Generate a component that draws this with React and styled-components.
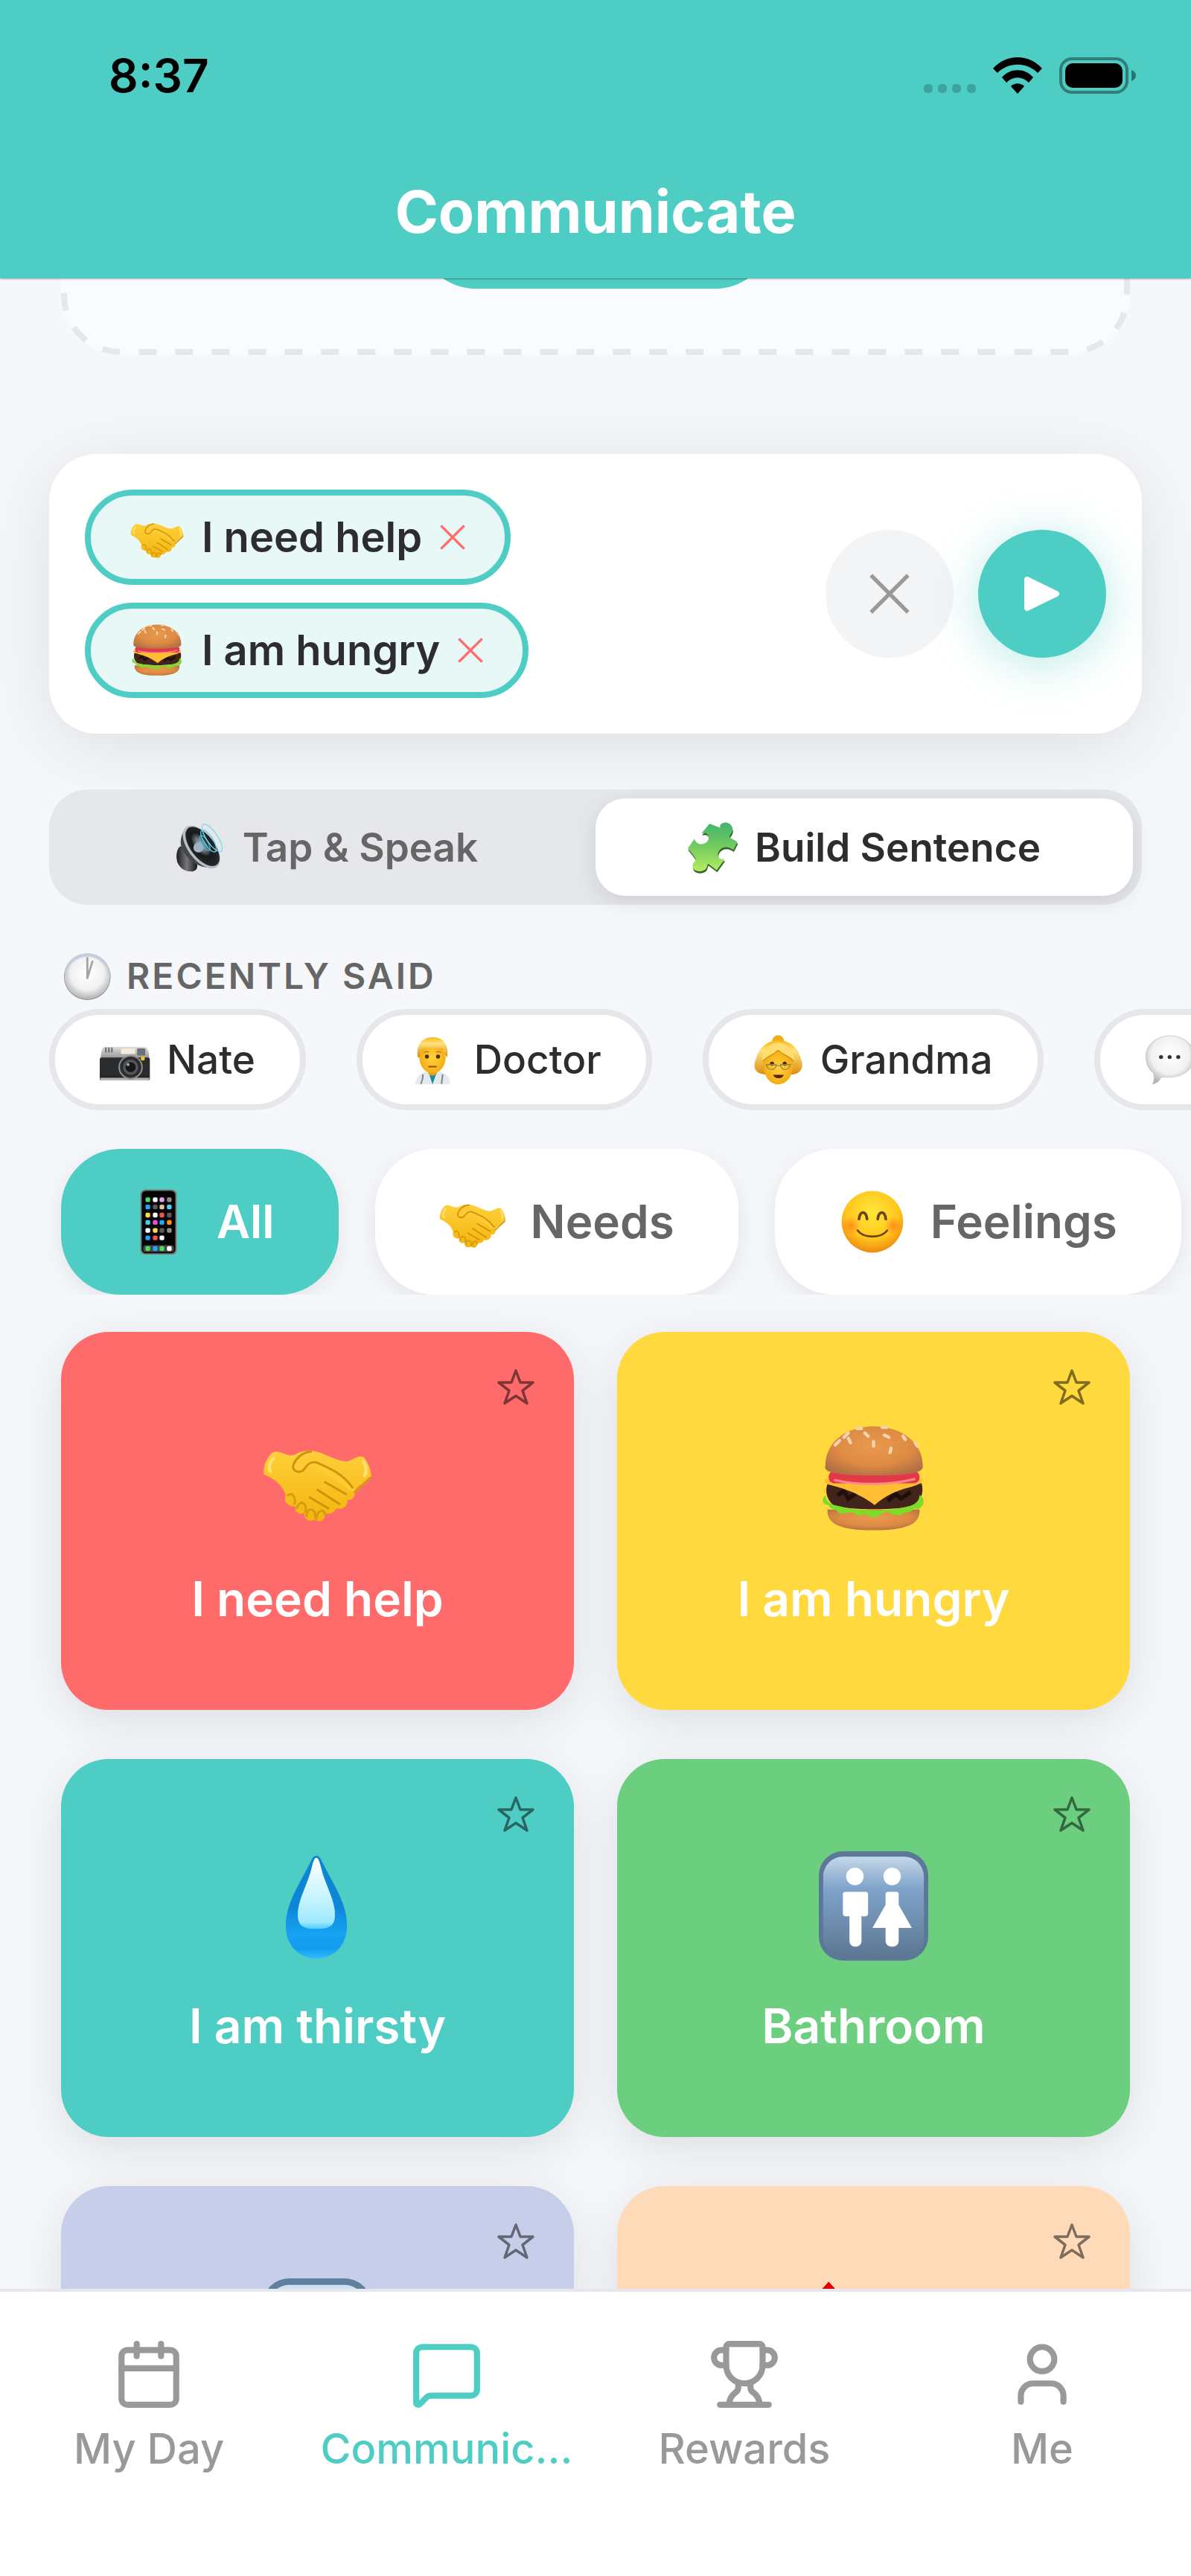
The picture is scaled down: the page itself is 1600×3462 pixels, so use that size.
import React, { useState } from 'react'
import styled, { createGlobalStyle } from 'styled-components';
import { Calendar, MessageSquare, Trophy, User } from 'lucide-react';

const teal = '#4ecdc4';

const GlobalStyle = createGlobalStyle`
* { box-sizing: border-box; }
body {
  margin: 0;
  background: #f5f7fb;
  font-family: Inter, "Liberation Sans", sans-serif;
}
button {
  font-family: inherit;
  border: none;
  padding: 0;
  margin: 0;
  background: none;
  cursor: pointer;
}
`;

const Screen = styled.div`
display: flex;
flex-direction: column;
height: 100vh;
overflow: hidden;
`;

const Header = styled.header`
position: relative;
z-index: 1;
background: ${teal};
box-shadow: 0 1px 2px rgba(0,0,0,0.35);
`;

const StatusBar = styled.div`
display: flex;
justify-content: space-between;
align-items: center;
padding: 64px 73px 0 146px;
`;

const Clock = styled.span`
font-size: 62px;
line-height: 76px;
font-weight: 600;
color: #000;
`;

const StatusIcons = styled.div`
display: flex;
align-items: center;
gap: 23px;
`;

const Title = styled.h1`
margin: 0;
padding: 94px 0 40px;
text-align: center;
font-size: 79px;
line-height: 100px;
font-weight: 700;
color: #fff;
`;

const Scroll = styled.main`
flex: 1;
min-height: 0;
overflow: hidden;
`;

/* the list is scrolled so this panel sits mostly under the header */
const AddPanel = styled.section`
position: relative;
display: flex;
justify-content: center;
margin: -157px 82px 0;
padding: 10px 0 89px;
background: #fafbfd;
border-radius: 80px;
`;

const DashedFrame = styled.svg`
position: absolute;
inset: 0;
width: 100%;
height: 100%;
rect {
  width: calc(100% - 8px);
  height: calc(100% - 8px);
}
`;

const AddButton = styled.button`
width: 480px;
height: 161px;
border-radius: 80px;
background: ${teal};
`;

const SentenceCard = styled.section`
display: flex;
justify-content: space-between;
align-items: center;
margin: 133px 66px 0;
padding: 48px;
border-radius: 64px;
background: #fff;
box-shadow: 0 16px 96px rgba(0,0,0,0.1);
`;

const Chips = styled.div`
display: flex;
flex-direction: column;
align-items: flex-start;
gap: 24px;
`;

const Chip = styled.button`
display: flex;
align-items: center;
gap: 24px;
padding: 20px 53px;
border: 8px solid ${teal};
border-radius: 64px;
background: #e8f8f6;
font-size: 56px;
line-height: 72px;
font-weight: 600;
color: #2d2d2f;
`;

const Actions = styled.div`
display: flex;
gap: 33px;
`;

const RoundButton = styled.button`
display: flex;
align-items: center;
justify-content: center;
width: 172px;
height: 172px;
border-radius: 50%;
background: ${({ $primary }) => ($primary ? teal : '#f3f4f6')};
box-shadow: ${({ $primary }) => ($primary ? '0 8px 64px rgba(78,205,196,0.4)' : 'none')};
`;

const Segmented = styled.div`
display: flex;
margin: 75px 66px 0;
padding: 12px;
border-radius: 52px;
background: #e5e7eb;
`;

const Segment = styled.button`
flex: 1;
display: flex;
align-items: center;
justify-content: center;
gap: 22px;
height: 131px;
border-radius: 40px;
font-size: 53px;
line-height: 68px;
font-weight: 600;
color: ${({ $active }) => ($active ? '#2d2d2f' : '#666')};
background: ${({ $active }) => ($active ? '#fff' : 'transparent')};
box-shadow: ${({ $active }) => ($active ? '0 8px 32px rgba(0,0,0,0.1)' : 'none')};
`;

const SectionTitle = styled.h2`
display: flex;
align-items: center;
gap: 18px;
margin: 62px 84px 10px;
font-size: 48px;
line-height: 68px;
font-weight: 600;
letter-spacing: 3px;
color: #666;
`;

const RecentRow = styled.div`
display: flex;
gap: 68px;
padding: 0 66px;
overflow: hidden;
`;

const RecentChip = styled.button`
flex: none;
display: flex;
align-items: center;
gap: 22px;
padding: 26px 60px;
border: 8px solid #e5e7ea;
border-radius: 68px;
background: #fff;
font-size: 53px;
line-height: 68px;
font-weight: 500;
color: #2d2d2f;
`;

const CategoryRow = styled.div`
display: flex;
gap: 49px;
margin: 52px 0 50px;
padding: 0 82px;
overflow: hidden;
`;

const Category = styled.button`
flex: none;
display: flex;
align-items: center;
gap: 33px;
height: 196px;
padding: 0 86px;
border-radius: 80px;
font-size: 62px;
line-height: 80px;
font-weight: 600;
color: ${({ $active }) => ($active ? '#fff' : '#666')};
background: ${({ $active }) => ($active ? teal : '#fff')};
box-shadow: 0 8px 32px rgba(0,0,0,0.08);
`;

const Grid = styled.div`
display: grid;
grid-template-columns: 1fr 1fr;
gap: 66px 58px;
padding: 0 82px;
`;

const Card = styled.div`
position: relative;
border-radius: 64px;
background: ${({ $color }) => $color};
box-shadow: 0 16px 64px rgba(0,0,0,0.1);
`;

const CardButton = styled.button`
display: flex;
flex-direction: column;
align-items: center;
gap: 48px;
width: 100%;
height: 508px;
padding-top: 124px;
font-size: 64px;
line-height: 80px;
font-weight: 600;
color: #fff;
`;

const StarButton = styled.button`
position: absolute;
top: 48px;
right: 52px;
width: 52px;
height: 52px;
`;

const TabBar = styled.nav`
display: grid;
grid-template-columns: repeat(4, 1fr);
height: 386px;
border-top: 4px solid #e5e7eb;
background: #fff;
`;

const Tab = styled.a`
display: flex;
flex-direction: column;
align-items: center;
gap: 17px;
padding-top: 62px;
font-size: 56px;
line-height: 68px;
font-weight: 500;
text-decoration: none;
color: ${({ $active }) => ($active ? teal : '#999')};
`;

const HiddenSvg = styled.svg`
position: absolute;
width: 0;
height: 0;
`;

const Gradients = () => (
  <HiddenSvg aria-hidden="true">
    <defs>
      <linearGradient id="hand" x1="0" y1="0" x2="0" y2="1">
        <stop offset="0" stopColor="#ffcf3a" />
        <stop offset="1" stopColor="#f2b50c" />
      </linearGradient>
      <radialGradient id="bun" cx="0.5" cy="0.4" r="0.65">
        <stop offset="0" stopColor="#e99a4e" />
        <stop offset="0.6" stopColor="#de8a43" />
        <stop offset="1" stopColor="#b06f45" />
      </radialGradient>
      <linearGradient id="drop" x1="0" y1="0" x2="0" y2="1">
        <stop offset="0" stopColor="#0a86cc" />
        <stop offset="0.5" stopColor="#0d86d8" />
        <stop offset="0.75" stopColor="#17a2f2" />
        <stop offset="0.9" stopColor="#129cee" />
        <stop offset="1" stopColor="#30bbff" />
      </linearGradient>
      <linearGradient id="dropShine" x1="0" y1="0" x2="0" y2="1">
        <stop offset="0" stopColor="#fff" />
        <stop offset="0.6" stopColor="#c2f3ff" />
        <stop offset="0.9" stopColor="#a0e9ff" />
        <stop offset="1" stopColor="#4fcbfc" />
      </linearGradient>
      <linearGradient id="sign" x1="0" y1="0" x2="0" y2="1">
        <stop offset="0" stopColor="#c4d8ea" />
        <stop offset="0.18" stopColor="#9db9d6" />
        <stop offset="0.32" stopColor="#7fa3cb" />
        <stop offset="1" stopColor="#5c7793" />
      </linearGradient>
      <radialGradient id="smile" cx="0.5" cy="0.35" r="0.65">
        <stop offset="0" stopColor="#ffe83a" />
        <stop offset="0.65" stopColor="#ffc61c" />
        <stop offset="1" stopColor="#f08a12" />
      </radialGradient>
      <radialGradient id="blush">
        <stop offset="0" stopColor="#ff7a1a" stopOpacity="0.75" />
        <stop offset="1" stopColor="#ff7a1a" stopOpacity="0" />
      </radialGradient>
      <linearGradient id="puzzle" x1="0" y1="0" x2="0" y2="1">
        <stop offset="0" stopColor="#3fb56c" />
        <stop offset="0.5" stopColor="#74cb5e" />
        <stop offset="1" stopColor="#b5ee62" />
      </linearGradient>
      <radialGradient id="bubble" cx="0.5" cy="0.4" r="0.6">
        <stop offset="0" stopColor="#fff" />
        <stop offset="0.65" stopColor="#f1f1f1" />
        <stop offset="1" stopColor="#b4b4b4" />
      </radialGradient>
      <linearGradient id="silver" x1="0" y1="0" x2="0" y2="1">
        <stop offset="0" stopColor="#dcdcdc" />
        <stop offset="1" stopColor="#8f8f8f" />
      </linearGradient>
      <linearGradient id="dark" x1="0" y1="0" x2="1" y2="0">
        <stop offset="0" stopColor="#1d1d1f" />
        <stop offset="0.5" stopColor="#77777a" />
        <stop offset="1" stopColor="#161618" />
      </linearGradient>
      <radialGradient id="cone" cx="0.45" cy="0.5" r="0.6">
        <stop offset="0" stopColor="#b7c6d2" />
        <stop offset="0.3" stopColor="#5e6a73" />
        <stop offset="0.5" stopColor="#17191b" />
        <stop offset="1" stopColor="#2b2e31" />
      </radialGradient>
      <radialGradient id="face" cx="0.5" cy="0.5" r="0.6">
        <stop offset="0" stopColor="#ffd23c" />
        <stop offset="1" stopColor="#f2a60d" />
      </radialGradient>
      <linearGradient id="hair" x1="0" y1="0" x2="0" y2="1">
        <stop offset="0" stopColor="#f9b915" />
        <stop offset="0.3" stopColor="#ffe27c" />
        <stop offset="1" stopColor="#d98a0b" />
      </linearGradient>
    </defs>
  </HiddenSvg>
);

const Handshake = () => (
  <g>
    <path d="M1 46C0 38 5 27 11 25C18 25 22 30 29 28C35 24 45 23 52 26C61 29 69 34 77 34C82 33 87 28 92 30C96 34 99 42 99 48C94 55 88 54 84 61C85 66 82 70 77 69C79 74 73 79 67 77C65 82 60 82 57 82C57 88 52 91 48 87C43 90 37 87 38 81C33 84 28 79 30 75C24 76 18 71 21 65C19 58 12 50 1 46Z" fill="url(#hand)" />
    <path d="M29 28C25 33 24 41 31 43C38 43 40 35 46 35C55 37 66 40 72 46C78 51 82 56 84 61C80 62 76 58 72 55" fill="#ffcb33" />
    <path d="M44 25C35 26 30 32 28 37C26 43 34 46 38 41C41 36 44 34 49 35C60 40 72 44 82 58M57 53L76 64M50 60L70 73M43 67L60 77" fill="none" stroke="#cf920c" strokeWidth="2" strokeLinecap="round" />
    <path d="M23 65C26 62 31 66 29 73M31 77C33 69 41 71 39 80M40 84C40 75 49 77 48 85M49 86C50 78 57 77 57 83M84 62L98 49" fill="none" stroke="#d79a10" strokeWidth="2" strokeLinecap="round" />
    <path d="M10 31C6 35 5 40 7 43M92 34C95 39 95 44 93 47" fill="none" stroke="#ffdf70" strokeWidth="3" strokeLinecap="round" />
  </g>
);

const Burger = () => (
  <g>
    <path d="M8 78C7 90 17 97 50 97C83 97 93 90 92 78Z" fill="url(#bun)" />
    <path d="M8 54H94C96 62 94 68 88 74C76 79 25 79 13 74C6 67 6 60 8 54Z" fill="#43241a" />
    <path d="M17 65L23 61L27 68L34 63M63 70L70 64L75 68L84 62" fill="none" stroke="#20100b" strokeWidth="4" />
    <path d="M6 65C2 68 3 74 9 74C10 79 15 76 18 81C21 84 28 78 33 82C37 86 41 80 46 84C50 87 55 84 59 81C65 79 69 85 75 83C80 79 83 82 87 77C92 79 93 76 95 74C97 70 95 66 92 65C92 70 88 74 82 75C66 80 36 80 19 75C11 74 7 71 6 65Z" fill="#7ddc28" />
    <path d="M6 50H95C96 54 89 56 82 58C70 61 60 66 51 74C42 67 29 60 8 55C5 54 5 51 6 50Z" fill="#ffbe32" />
    <rect x="9" y="43" width="83" height="11" rx="5" fill="#e5374a" />
    <path d="M14 51C35 56 65 56 88 50" fill="none" stroke="#ff8a8a" strokeWidth="2" />
    <path d="M6 38C6 17 24 2 50 2C76 2 95 17 95 38C96 44 87 47 50 47C14 47 4 44 6 38Z" fill="url(#bun)" />
    <path d="M15 19L19 15M23 12L27 8M35 4H39M42 8L45 11M27 13L29 17M50 16V20M60 10L64 12M77 11L79 14M66 22L65 26M88 17L90 20M58 3H62" stroke="#f1d4ad" strokeWidth="3" strokeLinecap="round" />
  </g>
);

const Drop = () => (
  <g>
    <path d="M49 4C52 4 53 7 55 11C65 31 77 48 77 68C77 86 65 98 49 98C33 98 21 86 21 68C21 48 33 31 43 11C45 7 46 4 49 4Z" fill="url(#drop)" />
    <path d="M49 6C51 6 52 10 53 14C57 31 66 44 66 58C66 69 60 71 49 71C38 71 32 69 32 58C32 44 41 31 45 14C46 10 47 6 49 6Z" fill="url(#dropShine)" />
  </g>
);

const Restroom = () => (
  <g>
    <rect width="100" height="100" rx="22" fill="#5b7898" />
    <rect x="4" y="5" width="92" height="92" rx="18" fill="url(#sign)" />
    <circle cx="33" cy="23" r="8" fill="#fff" />
    <circle cx="67" cy="23" r="8" fill="#fff" />
    <path d="M24 37H43C44 37 45 38 45 39V57C45 60 41 60 39 59V82C39 89 28 89 28 82V59C26 60 22 60 22 57V39C22 38 23 37 24 37Z" fill="#fff" />
    <path d="M63 37H71C72 37 73 38 73 39V49L85 70H73V82C73 89 61 89 61 82V70H49L61 49V39C61 38 62 37 63 37Z" fill="#fff" />
  </g>
);

const Tablet = () => (
  <g>
    <rect x="0" y="0" width="99" height="100" rx="24" fill="#5f7f9f" />
    <rect x="5" y="6" width="89" height="90" rx="19" fill="#cfe0ee" />
  </g>
);

const Stop = () => (
  <path d="M9 3L39 36H-21Z" fill="#e00000" />
);

const appColors = [
  ['#4cd964', '#fff', '#e39fe8', '#8e8e8e'],
  ['#1ea7fd', '#5a5a5a', '#ddc49f', '#4fd0f5'],
  ['#f7dc4a', '#fff', '#f5524a', '#5a5a5a'],
  ['#40d3e0', '#e84be0', '#1ea7fd', '#ff9500'],
  ['#fff', '#f7dc4a', '#5a5a5a', '#8e8e8e'],
  ['#1ea7fd', '#f5524a', '#fff'],
  ['#4cd964', '#1ea7fd', '#4cd964', '#fff'],
];
const appRows = [17, 28, 40, 51, 63, 74, 90];
const appCols = [34, 45, 55, 66];

const Phone = () => (
  <g>
    <rect x="23" y="2" width="54" height="97" rx="7" fill="#7d706c" />
    <rect x="25" y="4" width="50" height="93" rx="6" fill="#050505" />
    <rect x="27" y="85" width="46" height="10" rx="4" fill="#484848" />
    {appColors.map((row, r) => row.map((c, i) => (
      <rect key={`${r}-${i}`} x={appCols[i] - 3.5} y={appRows[r] - 3.5} width="7" height="7" rx="2" fill={c} />
    )))}
  </g>
);

const Smiley = () => (
  <g>
    <circle cx="50" cy="50" r="46" fill="url(#smile)" />
    <circle cx="18" cy="56" r="14" fill="url(#blush)" />
    <circle cx="82" cy="56" r="14" fill="url(#blush)" />
    <path d="M30 46C31 33 41 33 42 46M58 46C59 33 69 33 70 46" fill="none" stroke="#6b4310" strokeWidth="4" strokeLinecap="round" />
    <path d="M28 63C37 75 63 75 72 63" fill="none" stroke="#6b4310" strokeWidth="3" strokeLinecap="round" />
  </g>
);

const Speaker = () => (
  <g>
    <path d="M8 48C2 54 0 66 3 78C8 92 20 99 35 97C42 95 44 88 42 82L24 46Z" fill="url(#dark)" />
    <path d="M18 14C8 30 8 44 14 56C26 76 44 88 66 90L80 80Z" fill="#45484b" />
    <ellipse cx="51" cy="49" rx="50" ry="26" transform="rotate(52 51 49)" fill="#b9bec9" />
    <ellipse cx="53" cy="48" rx="46" ry="23" transform="rotate(52 53 48)" fill="url(#cone)" />
    <circle cx="45" cy="50" r="10" fill="#9fb3c2" />
    <ellipse cx="58" cy="41" rx="17" ry="6" transform="rotate(60 58 41)" fill="none" stroke="#3fb4cf" strokeWidth="2" />
    <ellipse cx="65" cy="37" rx="25" ry="9" transform="rotate(58 65 37)" fill="none" stroke="#59c9dd" strokeWidth="2" />
    <ellipse cx="72" cy="31" rx="32" ry="11" transform="rotate(56 72 31)" fill="none" stroke="#7fdcea" strokeWidth="2" />
  </g>
);

const puzzlePath = 'M43 3L64 11C62 4 69 -1 78 1C88 4 91 14 86 22C82 27 81 29 84 31L98 39L90 55C84 50 77 48 70 50C60 54 57 64 62 71C65 74 69 73 73 73L57 95L40 82C38 84 39 88 36 92C31 98 18 99 12 93C7 86 10 80 15 77C18 74 14 69 0 52L13 33C16 42 25 46 33 42C42 38 44 28 38 23C34 20 30 22 27 22Z';

const Puzzle = () => (
  <g>
    <path d={puzzlePath} fill="#35662f" transform="translate(1 4)" />
    <path d={puzzlePath} fill="url(#puzzle)" />
  </g>
);

const ClockFace = () => (
  <g>
    <circle cx="49" cy="51" r="46" fill="#8d8d93" />
    <circle cx="49" cy="50" r="45" fill="#c9cede" />
    <circle cx="49" cy="53" r="42" fill="url(#bubble)" />
    <path d="M49 14V54M59 21L49 54" stroke="#a3a3a3" strokeWidth="4" strokeLinecap="round" />
  </g>
);

const Camera = () => (
  <g>
    <path d="M12 25H24L28 25H86C94 25 96 30 97 38L98 50H1L4 32C4 27 7 25 12 25Z" fill="url(#silver)" />
    <path d="M12 26V36M18 26V36M24 26V36" stroke="#6c6c6c" strokeWidth="3" />
    <rect x="0" y="46" width="99" height="45" rx="4" fill="#2b2c2e" />
    <rect x="1" y="84" width="97" height="7" rx="3" fill="#b3b3b3" />
    <rect x="1" y="82" width="97" height="4" fill="#232323" />
    <rect x="42" y="28" width="28" height="11" rx="2" fill="#f1ecd9" />
    <rect x="74" y="28" width="16" height="14" rx="2" fill="#6d7074" />
    <circle cx="61" cy="65" r="24" fill="#8d8f91" />
    <circle cx="61" cy="65" r="21" fill="#2c2d30" />
    <circle cx="61" cy="65" r="15" fill="#55585c" />
    <circle cx="61" cy="65" r="10" fill="#17181a" />
    <circle cx="56" cy="60" r="3" fill="#9fa3a8" />
    <circle cx="85" cy="48" r="4" fill="#f5c421" />
  </g>
);

const Doctor = () => (
  <g>
    <path d="M16 99C17 82 26 76 40 73H61C75 76 84 82 85 99Z" fill="#e6e9ec" />
    <path d="M42 74L50 99L59 74Z" fill="#138a9e" />
    <path d="M31 79C32 90 28 94 27 98M70 79C70 88 68 90 68 98" fill="none" stroke="#7a8793" strokeWidth="3" />
    <path d="M42 66H58V78C54 83 46 83 42 78Z" fill="#e89f10" />
    <ellipse cx="50" cy="46" rx="26" ry="31" fill="url(#face)" />
    <path d="M21 46C17 22 29 6 50 6C71 6 83 20 79 46L75 40C75 29 70 26 60 27C45 29 33 24 28 30C26 36 26 41 25 45Z" fill="url(#hair)" />
    <circle cx="39" cy="44" r="4" fill="#4c2e0c" />
    <circle cx="61" cy="44" r="4" fill="#4c2e0c" />
    <path d="M33 36C37 34 41 34 43 36M57 36C60 34 64 34 67 36" fill="none" stroke="#b87a0d" strokeWidth="2" />
    <path d="M43 64H57" stroke="#8a5410" strokeWidth="3" strokeLinecap="round" />
  </g>
);

const Grandma = () => (
  <g>
    <circle cx="49" cy="14" r="12" fill="#f3ac14" />
    <path d="M49 12C24 12 10 30 4 52C-1 64 4 76 16 78C28 82 72 82 84 78C96 74 99 62 95 52C90 28 74 12 49 12Z" fill="url(#hair)" />
    <path d="M49 32C60 40 74 42 78 54C80 80 68 99 49 99C31 99 18 80 21 54C25 42 38 40 49 32Z" fill="url(#face)" />
    <path d="M49 32C40 42 24 44 19 54C14 36 30 18 49 16C69 18 84 36 80 54C75 44 58 42 49 32Z" fill="#ffdd6e" />
    <path d="M49 31C40 42 24 44 19 54M49 31C58 42 75 44 80 54" fill="none" stroke="#d18d0a" strokeWidth="2" />
    <circle cx="37" cy="58" r="4" fill="#4c2e0c" />
    <circle cx="62" cy="58" r="4" fill="#4c2e0c" />
    <path d="M26 60H45C45 73 28 73 26 60ZM54 60H73C71 73 54 73 54 60ZM45 62H54" fill="none" stroke="#9a8050" strokeWidth="2" />
    <path d="M39 80H60C58 89 42 89 39 80Z" fill="#5a2410" />
  </g>
);

const Bubble = () => (
  <g>
    <path d="M50 3C76 3 98 20 98 44C98 67 77 84 50 85C42 85 36 84 32 85C29 93 22 98 15 98C19 92 19 86 17 77C7 69 2 57 2 44C2 20 24 3 50 3Z" fill="url(#bubble)" stroke="#b9b9b9" strokeWidth="1" />
    <circle cx="32" cy="45" r="4" fill="#333" />
    <circle cx="49" cy="45" r="4" fill="#333" />
    <circle cx="66" cy="45" r="4" fill="#333" />
  </g>
);

const drawings = {
  handshake: Handshake,
  burger: Burger,
  drop: Drop,
  restroom: Restroom,
  tablet: Tablet,
  stop: Stop,
  phone: Phone,
  smiley: Smiley,
  speaker: Speaker,
  puzzle: Puzzle,
  clock: ClockFace,
  camera: Camera,
  doctor: Doctor,
  grandma: Grandma,
  bubble: Bubble,
};

const EmojiSvg = styled.svg`
flex: none;
display: block;
overflow: visible;
`;

const Emoji = ({ name, size }) => {
  const Drawing = drawings[name];
  return (
    <EmojiSvg width={size} height={size} viewBox="0 0 100 100" aria-hidden="true">
      <Drawing />
    </EmojiSvg>
  );
};

const CrossIcon = ({ size, color, weight }) => (
  <svg width={size} height={size} viewBox="0 0 50 50" aria-hidden="true">
    <path d="M2 2L48 48M48 2L2 48" stroke={color} strokeWidth={weight} />
  </svg>
);

const PlayIcon = () => (
  <svg width="50" height="50" viewBox="0 0 50 50" aria-hidden="true">
    <path d="M5 6L44 25L5 44Z" fill="#fff" stroke="#fff" strokeWidth="8" strokeLinejoin="round" />
  </svg>
);

const StarIcon = () => (
  <svg width="52" height="52" viewBox="0 0 52 52" aria-hidden="true">
    <path d="M26 4L32 20H49L35 31L41 48L26 38L11 48L17 31L3 20H20Z" fill="none" stroke="#000" strokeOpacity="0.5" strokeWidth="3.5" strokeLinejoin="round" />
  </svg>
);

const phrases = [
  { text: 'I need help', icon: 'handshake' },
  { text: 'I am hungry', icon: 'burger' },
];

const recent = [
  { text: 'Nate', icon: 'camera' },
  { text: 'Doctor', icon: 'doctor' },
  { text: 'Grandma', icon: 'grandma' },
  { text: '', icon: 'bubble' },
];

const categories = [
  { text: 'All', icon: 'phone' },
  { text: 'Needs', icon: 'handshake' },
  { text: 'Feelings', icon: 'smiley' },
];

const cards = [
  { text: 'I need help', icon: 'handshake', color: '#ff6b6b' },
  { text: 'I am hungry', icon: 'burger', color: '#ffd93d' },
  { text: 'I am thirsty', icon: 'drop', color: '#4ecdc4' },
  { text: 'Bathroom', icon: 'restroom', color: '#6bcf7f' },
  { text: '', icon: 'tablet', color: '#c7ceea' },
  { text: '', icon: 'stop', color: '#ffdab9' },
];

const tabs = [
  { text: 'My Day', Icon: Calendar },
  { text: 'Communic...', Icon: MessageSquare, active: true },
  { text: 'Rewards', Icon: Trophy },
  { text: 'Me', Icon: User },
];

const App = () => {
  const [mode, setMode] = useState('build');
  const [category, setCategory] = useState('All');

  return (
    <Screen>
      <GlobalStyle />
      <Gradients />
      <Header>
        <StatusBar>
          <Clock>8:37</Clock>
          <StatusIcons>
            <svg width="70" height="50" viewBox="0 0 70 50" aria-hidden="true">
              {[0, 19, 38, 58].map((x) => (
                <rect key={x} x={x} y="36" width="12" height="12" rx="5" fill="#3ca49d" />
              ))}
            </svg>
            <svg width="66" height="50" viewBox="0 0 66 50" aria-hidden="true">
              <path d="M0 15C18 -5 48 -5 66 15L60 21C45 6 21 6 6 21Z" />
              <path d="M12 27C23 14 43 14 54 27L48 34C39 25 27 25 18 34Z" />
              <path d="M24 39C29 34 37 34 42 39L33 49Z" />
            </svg>
            <svg width="104" height="50" viewBox="0 0 104 50" aria-hidden="true">
              <rect x="2" y="2" width="89" height="45" rx="15" fill="none" stroke="#327d77" strokeWidth="4" />
              <rect x="8" y="8" width="77" height="33" rx="10" />
              <path d="M97 17C105 20 105 29 97 32Z" fill="#287570" />
            </svg>
          </StatusIcons>
        </StatusBar>
        <Title>Communicate</Title>
      </Header>

      <Scroll>
        <AddPanel>
          <DashedFrame aria-hidden="true">
            <rect x="4" y="4" rx="76" fill="none" stroke="#e5e7ea" strokeWidth="8" strokeDasharray="24 25" />
          </DashedFrame>
          <AddButton aria-label="Add" />
        </AddPanel>

        <SentenceCard>
          <Chips>
            {phrases.map((p) => (
              <Chip key={p.text}>
                <Emoji name={p.icon} size={72} />
                {p.text}
                <CrossIcon size={34} color="#ff6b6b" weight={5} />
              </Chip>
            ))}
          </Chips>
          <Actions>
            <RoundButton aria-label="Clear">
              <CrossIcon size={54} color="#999" weight={5} />
            </RoundButton>
            <RoundButton $primary aria-label="Play">
              <PlayIcon />
            </RoundButton>
          </Actions>
        </SentenceCard>

        <Segmented>
          <Segment $active={mode === 'tap'} onClick={() => setMode('tap')}>
            <Emoji name="speaker" size={68} />
            Tap &amp; Speak
          </Segment>
          <Segment $active={mode === 'build'} onClick={() => setMode('build')}>
            <Emoji name="puzzle" size={68} />
            Build Sentence
          </Segment>
        </Segmented>

        <SectionTitle>
          <Emoji name="clock" size={68} />
          RECENTLY SAID
        </SectionTitle>
        <RecentRow>
          {recent.map((r) => (
            <RecentChip key={r.icon} aria-label={r.text || 'More'}>
              <Emoji name={r.icon} size={68} />
              {r.text}
            </RecentChip>
          ))}
        </RecentRow>

        <CategoryRow>
          {categories.map((c) => (
            <Category key={c.text} $active={category === c.text} onClick={() => setCategory(c.text)}>
              <Emoji name={c.icon} size={90} />
              {c.text}
            </Category>
          ))}
        </CategoryRow>

        <Grid>
          {cards.map((c) => (
            <Card key={c.icon} $color={c.color}>
              <CardButton aria-label={c.text || c.icon}>
                <Emoji name={c.icon} size={147} />
                {c.text}
              </CardButton>
              <StarButton aria-label="Favourite">
                <StarIcon />
              </StarButton>
            </Card>
          ))}
        </Grid>
      </Scroll>

      <TabBar>
        {tabs.map(({ text, Icon, active }) => (
          <Tab key={text} href="#" $active={active}>
            <Icon size={98} strokeWidth={2} />
            {text}
          </Tab>
        ))}
      </TabBar>
    </Screen>
  );
};

export default App;
